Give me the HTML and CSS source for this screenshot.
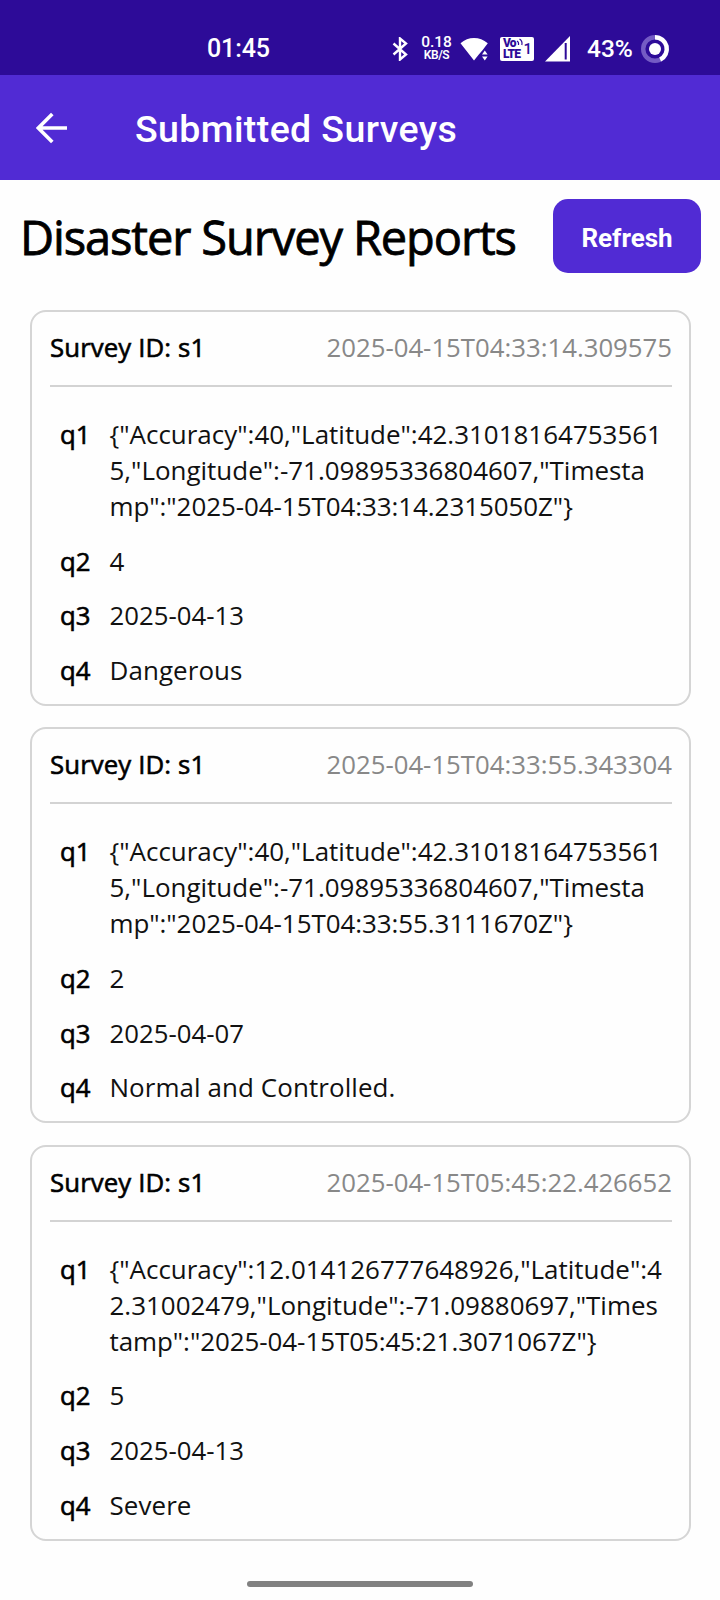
FILE: index.html
```html
<!DOCTYPE html>
<html lang="en">
<head>
<meta charset="utf-8">
<title>Submitted Surveys</title>
<link rel="stylesheet" href="styles.css">
</head>
<body>
<div class="status">
  <span class="clock">01:45</span>
  <div class="indicators">
    <svg class="bluetooth" width="16" height="24" viewBox="0 0 16 24"><path d="M1.5 6.5 14 17.5 8 22.5V1.5L14 6.5 1.5 17.5" fill="none" stroke="#fff" stroke-width="2.4"/></svg>
    <div class="speed"><span class="rate">0.18</span><span class="unit">KB/S</span></div>
    <svg class="wifi" width="29" height="24" viewBox="0 0 29 24"><path d="M14 23.5 0.5 6.2Q6.5 1 14 1T27.8 6.2L22.5 13.3 18.8 17.6Z" fill="#fff"/><path d="M22 17.5 24.8 13.5 27.6 17.5ZM22 19.5 24.8 23.5 27.6 19.5Z" fill="#fff"/></svg>
    <div class="volte">
      <div class="volte-text"><span>Vo</span><span>LTE</span></div><span class="sim">1</span>
      <svg class="waves" width="8" height="9" viewBox="0 0 8 9"><path d="M1 3Q3 4 2.5 7M3.5 1Q6.8 3 5.8 7" fill="none" stroke="#2d0b98" stroke-width="1.2"/></svg>
    </div>
    <svg class="signal" width="26" height="26" viewBox="0 0 26 26"><path d="M0 25.5 25 0V25.5Z" fill="#fff"/><path d="M20.7 7V23.5" stroke="#2d0b98" stroke-width="2"/></svg>
    <span class="percent">43%</span>
    <svg class="battery" width="30" height="30" viewBox="0 0 30 30"><circle cx="15" cy="15" r="11.8" fill="none" stroke="#745bc4" stroke-width="4.4"/><path d="M15 3.2A11.8 11.8 0 0 1 20.2 25.6" fill="none" stroke="#fff" stroke-width="4.4"/><circle cx="15" cy="15" r="6" fill="#fff"/></svg>
  </div>
</div>
<header class="appbar">
  <svg class="back" width="32" height="32" viewBox="0 0 32 32"><path d="M31 16H3M16.3 2 2.3 16l14 14" fill="none" stroke="#fff" stroke-width="3.6"/></svg>
  <h1>Submitted Surveys</h1>
</header>
<div class="heading">
  <h2>Disaster Survey Reports</h2>
  <button class="refresh">Refresh</button>
</div>
<main class="cards">
  <section class="card">
    <div class="card-head"><span class="id">Survey ID: s1</span><span class="time">2025-04-15T04:33:14.309575</span></div>
    <dl>
      <dt>q1</dt><dd>{"Accuracy":40,"Latitude":42.31018164753561<br>5,"Longitude":-71.09895336804607,"Timesta<br><span class="stamp">mp":"2025-04-15T04:33:14.2315050Z"}</span></dd>
      <dt>q2</dt><dd>4</dd>
      <dt>q3</dt><dd class="date">2025-04-13</dd>
      <dt>q4</dt><dd class="words">Dangerous</dd>
    </dl>
  </section>
  <section class="card">
    <div class="card-head"><span class="id">Survey ID: s1</span><span class="time">2025-04-15T04:33:55.343304</span></div>
    <dl>
      <dt>q1</dt><dd>{"Accuracy":40,"Latitude":42.31018164753561<br>5,"Longitude":-71.09895336804607,"Timesta<br><span class="stamp">mp":"2025-04-15T04:33:55.3111670Z"}</span></dd>
      <dt>q2</dt><dd>2</dd>
      <dt>q3</dt><dd class="date">2025-04-07</dd>
      <dt>q4</dt><dd class="words">Normal and Controlled.</dd>
    </dl>
  </section>
  <section class="card">
    <div class="card-head"><span class="id">Survey ID: s1</span><span class="time">2025-04-15T05:45:22.426652</span></div>
    <dl>
      <dt>q1</dt><dd>{"Accuracy":12.014126777648926,"Latitude":4<br>2.31002479,"Longitude":-71.09880697,"Times<br><span class="stamp">tamp":"2025-04-15T05:45:21.3071067Z"}</span></dd>
      <dt>q2</dt><dd>5</dd>
      <dt>q3</dt><dd class="date">2025-04-13</dd>
      <dt>q4</dt><dd class="words">Severe</dd>
    </dl>
  </section>
</main>
<div class="nav-handle"></div>
</body>
</html>
```

FILE: styles.css
```css
* { box-sizing: border-box; margin: 0; padding: 0; }
body { width: 720px; height: 1600px; overflow: hidden; background: #fefefe; color: #111; font-family: "Open Sans", sans-serif; font-size: 25.75px; }
svg { display: block; flex: none; }

.status { height: 75px; padding: 22px 50px 0 207px; background: #2d0b98; color: #fff; display: flex; justify-content: space-between; font-family: Roboto, sans-serif; font-weight: 500; }
.clock, .percent { font-size: 25px; line-height: 54px; }
.clock { letter-spacing: -0.1px; }
.indicators { display: flex; align-items: center; height: 53px; }
.bluetooth { margin-right: 13px; }
.speed { width: 31px; margin-right: 8px; display: flex; flex-direction: column; align-items: center; white-space: nowrap; }
.rate { font-size: 15.5px; line-height: 13px; font-weight: 500; }
.unit { font-size: 12px; line-height: 12px; font-weight: 600; letter-spacing: -0.4px; }
.wifi { margin-right: 11px; }
.volte { position: relative; width: 34px; height: 24px; margin-right: 11px; padding: 1px 2px 0 3px; background: #fff; color: #2d0b98; border-radius: 2px; display: flex; justify-content: space-between; font-weight: 900; }
.volte-text { display: flex; flex-direction: column; font-size: 12px; line-height: 11px; letter-spacing: -0.8px; }
.sim { font-size: 15px; line-height: 23px; font-weight: 500; }
.waves { position: absolute; left: 16px; top: 1px; }
.signal { margin-right: 16px; }
.percent { width: 46px; margin-right: 7px; font-size: 24.5px; white-space: nowrap; }

.appbar { height: 105px; padding: 0 36px; background: #512bd4; color: #fff; display: flex; align-items: center; }
.appbar h1 { margin-left: 67px; padding-top: 3px; font: 500 37.5px/44px Roboto, sans-serif; letter-spacing: 0.4px; }

.heading { height: 130px; padding: 19px 19px 0 20px; display: flex; justify-content: space-between; align-items: flex-start; color: #000; }
.heading h2 { font-size: 47px; line-height: 76px; font-weight: 400; letter-spacing: -1.12px; -webkit-text-stroke: 0.8px #000; white-space: nowrap; }
.refresh { width: 148px; height: 74px; padding-top: 4px; border: 0; border-radius: 15px; background: #512bd4; color: #fff; font: 700 26px/70px Roboto, sans-serif; }

.cards { padding: 0 29px 0 30px; display: flex; flex-direction: column; gap: 21.4px; }
.card { height: 396px; border: 2px solid #d5d5d5; border-radius: 16px; padding: 0 17px 0 18px; }
.card-head { height: 75px; border-bottom: 2px solid #d3d3d3; display: flex; justify-content: space-between; line-height: 71px; }
.id, dt { color: #000; -webkit-text-stroke: 0.6px #000; }
.id { letter-spacing: 0.12px; }
.time { color: #888; }
dl { padding: 29px 0 0 10px; display: grid; grid-template-columns: 49.5px 1fr; row-gap: 18.6px; line-height: 36px; white-space: nowrap; }
dd { font-size: 25.96px; }
.date { font-size: 25.75px; }
.stamp { letter-spacing: -0.06px; }
.words { letter-spacing: 0.08px; }

.nav-handle { width: 226px; height: 6px; margin: 40px auto 0; border-radius: 3px; background: #818181; }
```
